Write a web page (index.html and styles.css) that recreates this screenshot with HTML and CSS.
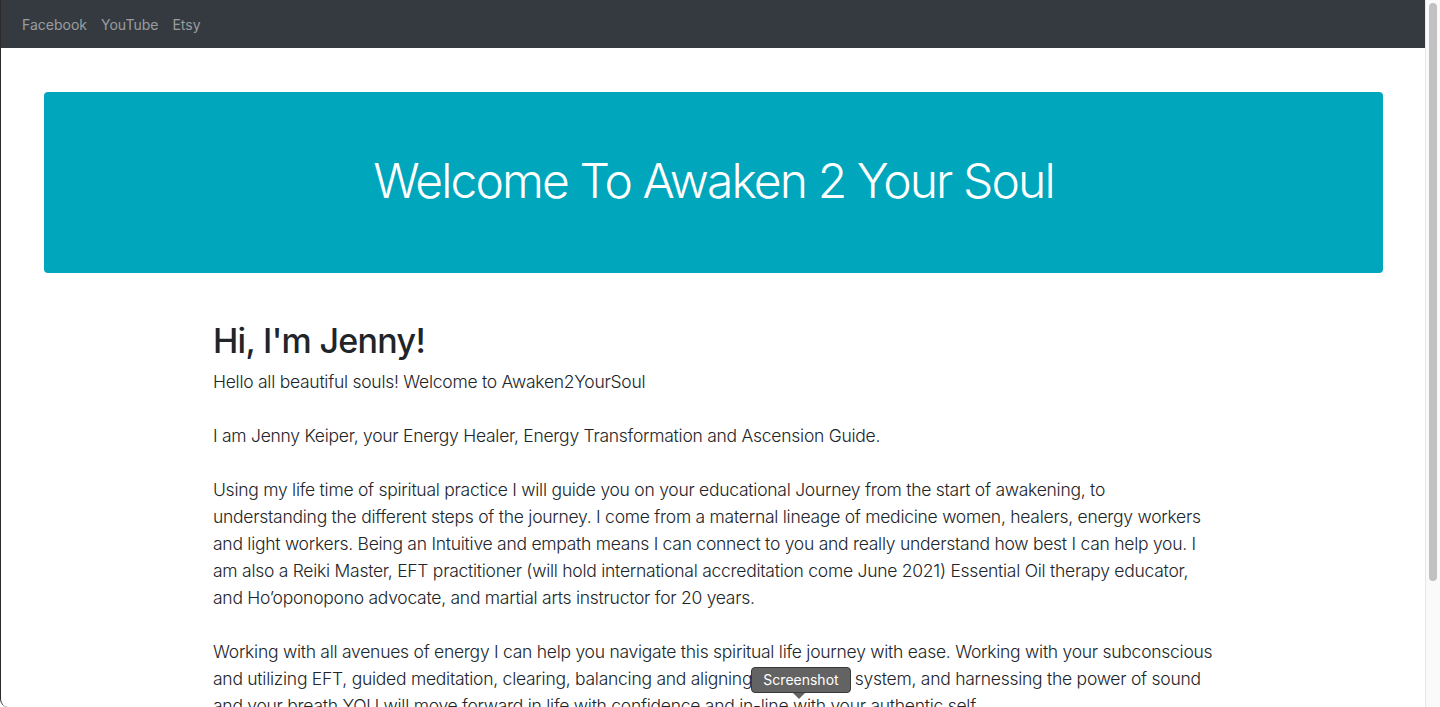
FILE: index.html
```html
<!DOCTYPE html>
<html lang="en">
<head>
<meta charset="utf-8">
<title>Awaken 2 Your Soul</title>
<link rel="stylesheet" href="styles.css">
</head>
<body>
<div class="window">
  <div class="viewport">
    <nav class="navbar">
      <a class="nav-link" href="#">Facebook</a>
      <a class="nav-link" href="#">YouTube</a>
      <a class="nav-link" href="#">Etsy</a>
    </nav>
    <header class="jumbotron">
      <h1 class="display">Welcome To Awaken 2 Your Soul</h1>
    </header>
    <main class="content">
      <h2 class="title">Hi, I'm Jenny!</h2>
      <p class="text">Hello all beautiful souls! Welcome to Awaken2YourSoul<br><br>I am Jenny Keiper, your Energy Healer, Energy Transformation and Ascension Guide.<br><br>Using my life time of spiritual practice I will guide you on your educational Journey from the start of awakening, to understanding the different steps of the journey. I come from a maternal lineage of medicine women, healers, energy workers and light workers. Being an Intuitive and empath means I can connect to you and really understand how best I can help you. I am also a Reiki Master, EFT practitioner (will hold international accreditation come June 2021) Essential Oil therapy educator, and Ho’oponopono advocate, and martial arts instructor for 20 years.<br><br>Working with all avenues of energy I can help you navigate this spiritual life journey with ease. Working with your subconscious and utilizing EFT, guided meditation, clearing, balancing and aligning your chakra system, and harnessing the power of sound and your breath YOU will move forward in life with confidence and in-line with your authentic self.</p>
    </main>
    <div class="shade"></div>
    <div class="tooltip">Screenshot</div>
  </div>
  <div class="scrollbar"><div class="thumb"></div></div>
</div>
</body>
</html>
```
FILE: styles.css
```css
html, body {
  margin: 0;
  padding: 0;
  height: 707px;
  overflow: hidden;
  background: #ffffff;
}
body {
  font-family: Inter, "Noto Sans", "Liberation Sans", sans-serif;
  color: #212529;
}
.window {
  display: flex;
  height: 707px;
  border-left: 1px solid #2b2b2b;
  border-bottom-left-radius: 8px;
  box-sizing: border-box;
  overflow: hidden;
}
.viewport {
  position: relative;
  flex: 1;
  overflow: hidden;
  border-right: 1px solid #e6e6e6;
}
.navbar {
  display: flex;
  align-items: center;
  gap: 14px;
  height: 48px;
  padding: 0 21px;
  background: #343a40;
}
.nav-link {
  color: rgba(255, 255, 255, 0.5);
  text-decoration: none;
  font-size: 14px;
  font-weight: 400;
}
.jumbotron {
  margin: 44px 42px 0 43px;
  height: 181px;
  background: #00a7bc;
  border-radius: 4px;
  display: flex;
  align-items: center;
  justify-content: center;
}
.display {
  margin: 0;
  color: #ffffff;
  font-size: 48px;
  font-weight: 300;
  letter-spacing: -1.9px;
  padding-bottom: 4px;
}
.content {
  width: 1000px;
  margin: 0 auto;
  padding-top: 46px;
}
.title {
  margin: 0 0 6px;
  font-size: 34px;
  font-weight: 500;
  line-height: 43px;
  letter-spacing: -0.7px;
}
.text {
  margin: 0;
  font-size: 17.5px;
  font-weight: 300;
  line-height: 27px;
  letter-spacing: -0.26px;
}
.shade {
  position: absolute;
  left: 0;
  right: 0;
  bottom: -40px;
  height: 70px;
  background: radial-gradient(ellipse 48% 50% at 50% 100%, rgba(0,0,0,0.12), rgba(0,0,0,0) 100%);
  pointer-events: none;
}
.tooltip {
  position: absolute;
  left: 750px;
  top: 667px;
  width: 100px;
  height: 26px;
  box-sizing: border-box;
  background: #636363;
  border: 1px solid #3a3a3a;
  border-radius: 4px;
  color: #ffffff;
  font-size: 14px;
  line-height: 24px;
  text-align: center;
}
.tooltip::after {
  content: "";
  position: absolute;
  left: 41px;
  bottom: -7px;
  border-left: 6px solid transparent;
  border-right: 6px solid transparent;
  border-top: 6px solid #636363;
}
.scrollbar {
  width: 14px;
  background: #fafafa;
  padding: 3px 2px 0 3px;
  box-sizing: border-box;
}
.thumb {
  width: 8px;
  height: 578px;
  background: #c1c1c1;
  border-radius: 4px;
}
```
